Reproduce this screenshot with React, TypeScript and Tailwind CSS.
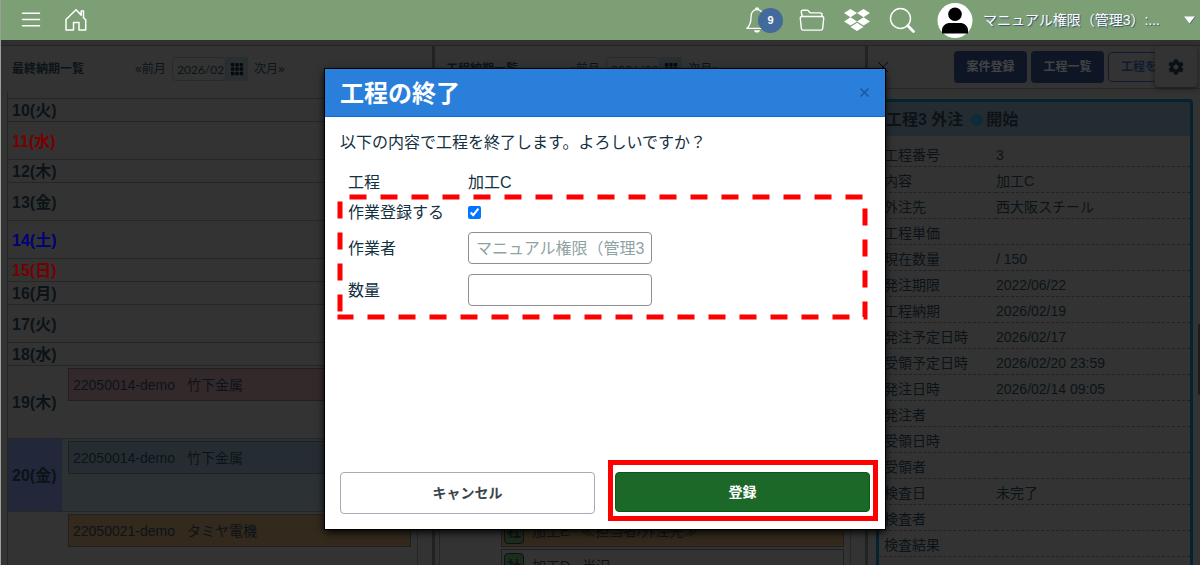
import { useState } from 'react';
import { FaCog, FaDropbox } from 'react-icons/fa';
import { BsGrid3X3GapFill } from 'react-icons/bs';
import clsx from 'clsx';

interface Job {
  code: string;
  customer: string;
  tone: string;
}

interface Day {
  label: string;
  height: string;
  color?: string;
  today?: boolean;
  job?: Job;
}

const days: Day[] = [
  { label: '10(火)', height: 'h-[23px]' },
  { label: '11(水)', height: 'h-[38px]', color: 'text-[#780000]' },
  { label: '12(木)', height: 'h-[23px]' },
  { label: '13(金)', height: 'h-[38px]' },
  { label: '14(土)', height: 'h-[38px]', color: 'text-[#000078]' },
  { label: '15(日)', height: 'h-[23px]', color: 'text-[#780000]' },
  { label: '16(月)', height: 'h-[23px]' },
  { label: '17(火)', height: 'h-[38px]' },
  { label: '18(水)', height: 'h-[23px]' },
  {
    label: '19(木)',
    height: 'h-[73px]',
    job: { code: '22050014-demo', customer: '竹下金属', tone: 'bg-[#33292b]' },
  },
  {
    label: '20(金)',
    height: 'h-[73px]',
    today: true,
    job: { code: '22050014-demo', customer: '竹下金属', tone: 'bg-[#262d32]' },
  },
  {
    label: '',
    height: 'h-[73px]',
    job: { code: '22050021-demo', customer: 'タミヤ電機', tone: 'bg-[#33291c]' },
  },
];

const details: [string, string][] = [
  ['工程番号', '3'],
  ['内容', '加工C'],
  ['外注先', '西大阪スチール'],
  ['工程単価', ''],
  ['現在数量', '/ 150'],
  ['発注期限', '2022/06/22'],
  ['工程納期', '2026/02/19'],
  ['発注予定日時', '2026/02/17'],
  ['受領予定日時', '2026/02/20 23:59'],
  ['発注日時', '2026/02/14 09:05'],
  ['発注者', ''],
  ['受領日時', ''],
  ['受領者', ''],
  ['検査日', '未完了'],
  ['検査者', ''],
  ['検査結果', ''],
];

function Header() {
  return (
    <header className="flex h-10 shrink-0 items-center bg-[#7d9f76] pl-[18px] pr-1 text-white">
      <button aria-label="メニュー" className="mr-5">
        <svg width="24" height="24" viewBox="0 0 24 24" fill="none" stroke="currentColor" strokeWidth="1.5" strokeLinecap="round">
          <path d="M3.500 5.200h17M3.500 11.500h17M3.500 17.700h17" />
        </svg>
      </button>
      <a href="#" aria-label="ホーム">
        <svg width="24" height="24" viewBox="0 0 24 24" fill="none" stroke="currentColor" strokeWidth="1.5" strokeLinejoin="round">
          <path d="M3 11.500 13 1.800l5.200 5.300V3h2.300v6.700l2.200 2V22h-6.700v-7.400h-5.500V22H3z" />
        </svg>
      </a>

      <div className="ml-auto flex items-center">
        <button aria-label="通知" className="flex items-center">
          <svg width="26" height="26" viewBox="0 0 26 26" fill="none" stroke="currentColor" strokeWidth="1.3" strokeLinejoin="round">
            <path d="M13 2.6c-4.1 0-5.900 3.200-5.900 7.200 0 5.400-.8 8.700-4.300 11.600h20.400c-3.500-2.900-4.300-6.200-4.300-11.600 0-4-1.800-7.200-5.900-7.200z" />
            <path d="M11.500 2.500a1.500 1.500 0 0 1 3 0" />
            <path d="M10 23.200h6c-.3 1.500-1.300 2.300-3 2.300s-2.700-.8-3-2.300z" fill="currentColor" strokeWidth="0" />
          </svg>
          <span className="-ml-3 flex size-[25px] items-center justify-center rounded-full bg-[#426a9b] text-[11px] font-bold">
            9
          </span>
        </button>
        <button aria-label="フォルダ" className="ml-4">
          <svg width="26" height="24" viewBox="0 0 26 24" fill="none" stroke="currentColor" strokeWidth="1.4" strokeLinejoin="round">
            <path d="M3.300 8.500 2.300 4.500c-.3-1.600.5-2.300 1.500-2.300h4.400c1.200 0 1.500.8 2 1.700.4.800.9 1 1.700 1h9.300c1.500 0 2 .8 1.800 2l-.3 1.600" />
            <path d="M2.800 8.500h20.400c1 0 1.600.7 1.500 1.700l-1 10c-.1 1.200-.8 1.900-1.900 1.900H4.200c-1.100 0-1.800-.7-1.900-1.900l-1-10c-.1-1 .5-1.700 1.500-1.700z" />
          </svg>
        </button>
        <button aria-label="Dropbox" className="ml-[19px]">
          <FaDropbox className="size-[26px]" />
        </button>
        <button aria-label="検索" className="ml-[19px]">
          <svg width="27" height="27" viewBox="0 0 27 27" fill="none" stroke="currentColor" strokeLinecap="round">
            <circle cx="11.500" cy="11.500" r="10" strokeWidth="1.400" />
            <path d="m18.800 18.800 5.700 5.700" strokeWidth="2.800" />
          </svg>
        </button>
        <button className="ml-[21px] flex items-center">
          <svg width="36" height="36" viewBox="0 0 36 36">
            <circle cx="18" cy="18.500" r="17.500" fill="#fff" />
            <circle cx="18" cy="12.300" r="6.800" fill="#000" />
            <path d="M5 31.500v-3c0-5 4-7.500 8-7.500h10c4 0 8 2.500 8 7.500v3z" fill="#000" />
          </svg>
          <span className="ml-2.5 text-sm [text-shadow:1px_1px_1px_#34506f]">マニュアル権限（管理3）:...</span>
          <svg className="ml-[22px]" width="14" height="12" viewBox="0 0 14 12">
            <path d="M2.500 3h11L8 10z" fill="#34506f" />
            <path d="M2 2.500h11L7.500 9.500z" fill="#fff" />
          </svg>
        </button>
      </div>
    </header>
  );
}

function ListToolbar({ title }: { title: string }) {
  return (
    <div className="flex h-[46px] items-center pl-[11px] text-xs whitespace-nowrap">
      <h2 className="w-[123px] font-bold">{title}</h2>
      <button className="w-[37px] text-left">«前月</button>
      <input
        type="text"
        aria-label="年月"
        defaultValue="2026/02"
        className="h-6 w-[54px] rounded-sm border border-[#292929] pl-1 font-[Lato,sans-serif] text-xs"
      />
      <button aria-label="月を選択" className="mr-1.5 flex h-6 w-[22px] items-center justify-center bg-[#292e30]">
        <BsGrid3X3GapFill className="size-3.5 text-[#070a0c]" />
      </button>
      <button>次月»</button>
    </div>
  );
}

function DeadlineList() {
  return (
    <div className="mr-[14px] ml-1.5 border-x border-[#262626] pt-1.5">
      {days.map((day) => (
        <div
          key={day.label}
          className={clsx('flex border-t border-[#262626]', day.height, day.today && 'bg-[#2c3134]')}
        >
          <div
            className={clsx(
              'flex w-[54px] shrink-0 items-center pt-0.5 pl-1 text-base font-bold whitespace-nowrap',
              day.color ?? 'text-[#0c1318]',
              day.today && 'bg-[#22283a]',
            )}
          >
            {day.label}
          </div>
          {day.job && (
            <div
              className={clsx(
                'mt-0.5 mr-1.5 ml-1.5 flex h-[33px] flex-1 items-center gap-3 border border-[#202020] pl-1 text-sm',
                day.job.tone,
              )}
            >
              <span>{day.job.code}</span>
              <span>{day.job.customer}</span>
            </div>
          )}
        </div>
      ))}
    </div>
  );
}

function ProcessItem({ name, owner, tone }: { name: string; owner: string; tone: string }) {
  return (
    <div className={clsx('flex h-[33px] shrink-0 items-center border border-[#202020] pl-0.5 text-sm', tone)}>
      <span className="flex h-[26px] w-5 items-center justify-center rounded border border-[#0c1318] bg-[#1e2c1c] font-bold">
        社
      </span>
      <span className="ml-2">{name}</span>
      <span className="ml-3">{owner}</span>
    </div>
  );
}

function DetailPanel() {
  return (
    <aside className="relative min-w-0">
      <div className="flex h-[43px] items-center gap-1 overflow-hidden border-b border-[#272727] pl-[9px] text-xs font-bold whitespace-nowrap">
        <button aria-label="閉じる" className="mr-[61px]">
          <svg width="12" height="12" viewBox="0 0 12 12" stroke="#090d10" strokeWidth="1">
            <path d="m1 1 10 10M11 1 1 11" />
          </svg>
        </button>
        <button className="h-8 w-[73px] shrink-0 rounded bg-[#0e1626] text-[#424344]">案件登録</button>
        <button className="h-8 w-[73px] shrink-0 rounded bg-[#0e1626] text-[#424344]">工程一覧</button>
        <button className="h-[30px] w-[86px] shrink-0 rounded border border-[#111b30] pl-3 text-left text-[#111b30]">
          工程を
        </button>
      </div>
      <button
        aria-label="設定"
        className="absolute top-0 right-[3px] flex h-[41px] w-[42px] items-center justify-center rounded bg-[#333] shadow-[0_2px_4px_#1c1c1c]"
      >
        <FaCog className="size-4 text-[#0a1116]" />
      </button>

      <section className="mt-2.5 mr-[7px] ml-2 rounded-t border-[3px] border-b-0 border-[#04232f] pb-8">
        <h2 className="flex h-[34px] items-center bg-[#252c31] pt-0.5 pl-[7px] text-base font-bold whitespace-nowrap">
          工程3 外注
          <span className="mr-[3px] ml-2 size-3 rounded-full bg-[#0b2c38]" />
          開始
        </h2>
        <table className="mt-1 w-full table-fixed text-sm">
          <tbody>
            {details.map(([label, value]) => (
              <tr key={label} className="h-[26px] border-b border-dashed border-[#222]">
                <th scope="row" className="w-[117px] p-0 pt-1 pl-[5px] text-left font-normal">{label}</th>
                <td className="p-0 pt-1">{value}</td>
              </tr>
            ))}
          </tbody>
        </table>
      </section>
      <div className="absolute top-[278px] right-0 h-[71px] w-0.5 rounded-l bg-[#1c1c1c]" />
    </aside>
  );
}

function FinishDialog() {
  const [register, setRegister] = useState(true);
  const [quantity, setQuantity] = useState('');

  return (
    <div
      role="dialog"
      aria-labelledby="dialog-title"
      className="relative w-[560px] bg-white text-base text-[#14303f] shadow-[0_0_0_1px_#000,0_3px_8px_#000]"
    >
      <div className="flex h-12 items-center justify-between border-b border-[#0c6dcc] bg-[#2a7fdb] px-[15px]">
        <h1 id="dialog-title" className="pt-0.5 text-2xl font-bold text-white">工程の終了</h1>
        <button aria-label="閉じる" className="text-[#17599f]">
          <svg width="11" height="11" viewBox="0 0 11 11" stroke="currentColor" strokeWidth="1.600">
            <path d="m1.500 1.500 8 8M9.500 1.500l-8 8" />
          </svg>
        </button>
      </div>

      <div className="px-[15px] pt-3.5">
        <p className="leading-6">以下の内容で工程を終了します。よろしいですか？</p>
        <div className="mt-3 grid grid-cols-[120px_184px] items-center pl-2">
          <span className="h-[30px] leading-8">工程</span>
          <span className="h-[30px] leading-8">加工C</span>
          <label htmlFor="register" className="h-[30px] leading-8">作業登録する</label>
          <input
            id="register"
            type="checkbox"
            checked={register}
            onChange={(e) => setRegister(e.target.checked)}
            className="size-[13px]"
          />
          <label htmlFor="worker" className="h-[42px] leading-[44px]">作業者</label>
          <input
            id="worker"
            type="text"
            readOnly
            value="マニュアル権限（管理3）"
            className="h-8 w-full rounded border border-[#8f8f8f] px-[7px] pb-0.5 text-[#8fa3a3]"
          />
          <label htmlFor="quantity" className="h-[42px] leading-[44px]">数量</label>
          <input
            id="quantity"
            type="text"
            value={quantity}
            onChange={(e) => setQuantity(e.target.value)}
            className="h-8 w-full rounded border border-[#8f8f8f] px-[7px] pb-0.5"
          />
        </div>
      </div>

      <div className="mt-[161px] grid grid-cols-2 items-start gap-5 px-[15px] pb-[15px] text-sm font-bold">
        <button className="h-[42px] rounded border border-[#a2adb8] text-[#3d4449]">キャンセル</button>
        <div className="relative">
          <button className="h-10 w-full rounded border border-[#065d10] bg-[#1b6829] text-white">登録</button>
          <div className="pointer-events-none absolute -top-3 -right-2 -bottom-[9px] -left-[7px] border-[5px] border-[#fe0000]" />
        </div>
      </div>

      {/* Highlight around the work registration fields */}
      <svg className="pointer-events-none absolute top-[124px] left-3 h-[130px] w-[534px]" viewBox="0 0 534 130" fill="none">
        <path d="M3 118.500V4H528V124H0.500" stroke="#fe0000" strokeWidth="5" strokeDasharray="17 14" />
      </svg>
    </div>
  );
}

export default function App() {
  return (
    <div className="relative flex h-screen flex-col overflow-hidden border-l border-[#9b9f9b] bg-[#333] font-['Liberation_Sans','Noto_Sans_CJK_JP',sans-serif] text-[#0c1318]">
      <Header />
      <div className="h-1.5 shrink-0 border-b border-[#242424] bg-[#302f30]" />
      <main className="grid min-h-0 flex-1 grid-cols-[431fr_3px_430fr_3px_332fr]">
        <section className="min-w-0">
          <ListToolbar title="最終納期一覧" />
          <DeadlineList />
        </section>
        <div className="bg-[#222]" />
        <section className="flex min-h-0 min-w-0 flex-col">
          <ListToolbar title="工程納期一覧" />
          <div className="mr-[14px] ml-1 flex min-h-0 flex-1 flex-col gap-0.5 border-x border-[#262626] pt-[422px] pr-1.5 pl-[61px]">
            <ProcessItem name="加工E" owner="≪担当者/外注先≫" tone="bg-[#33291c]" />
            <ProcessItem name="加工D" owner="半沢" tone="bg-[#333]" />
          </div>
        </section>
        <div className="bg-[#222]" />
        <DetailPanel />
      </main>

      <div className="absolute inset-x-0 top-[69px] flex justify-center pl-[9px]">
        <FinishDialog />
      </div>
    </div>
  );
}
